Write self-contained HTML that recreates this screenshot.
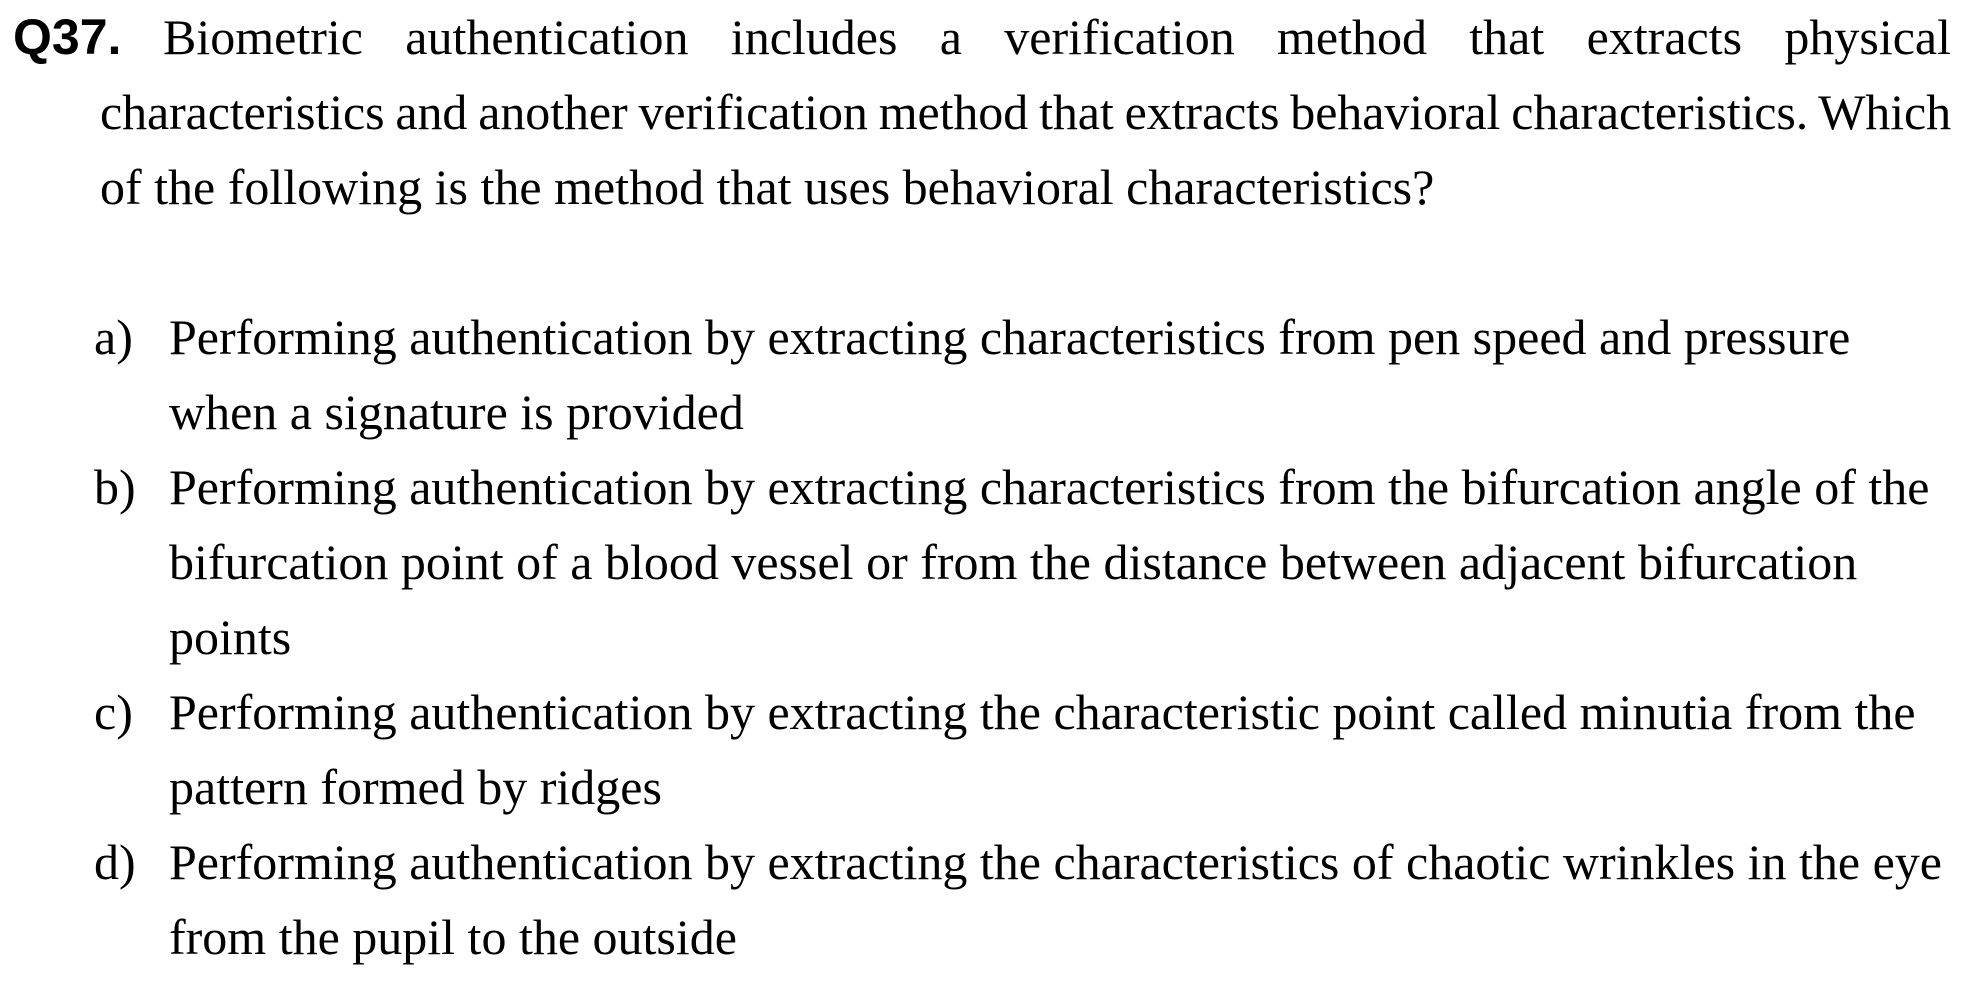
<!DOCTYPE html>
<html><head><meta charset="utf-8"><style>
html,body{margin:0;padding:0;background:#fff;}
body{width:1967px;height:984px;overflow:hidden;position:relative;font-family:"Liberation Serif","Times New Roman",serif;font-size:50px;color:#000;}
.l{position:absolute;height:75px;line-height:75px;white-space:nowrap;}
.j{text-align:justify;text-align-last:justify;left:100px;width:1851px;}
.q{position:absolute;left:13px;top:0px;line-height:75px;font-family:"Liberation Sans",Arial,sans-serif;font-weight:bold;font-size:50px;}
.lab{position:absolute;left:94px;line-height:75px;}
.t{left:169px;}
</style></head><body>
<div class="q">Q37.</div>
<div class="l j" style="left:163px;width:1788px;top:0px">Biometric authentication includes a verification method that extracts physical</div>
<div class="l j" style="top:75px;word-spacing:-3px;letter-spacing:-0.1px">characteristics and another verification method that extracts behavioral characteristics. Which</div>
<div class="l" style="left:100px;top:150px">of the following is the method that uses behavioral characteristics?</div>

<div class="lab" style="top:300px">a)</div>
<div class="l t" style="top:300px">Performing authentication by extracting characteristics from pen speed and pressure</div>
<div class="l t" style="top:375px">when a signature is provided</div>

<div class="lab" style="top:450px">b)</div>
<div class="l t" style="top:450px">Performing authentication by extracting characteristics from the bifurcation angle of the</div>
<div class="l t" style="top:525px">bifurcation point of a blood vessel or from the distance between adjacent bifurcation</div>
<div class="l t" style="top:600px">points</div>

<div class="lab" style="top:675px">c)</div>
<div class="l t" style="top:675px">Performing authentication by extracting the characteristic point called minutia from the</div>
<div class="l t" style="top:750px">pattern formed by ridges</div>

<div class="lab" style="top:825px">d)</div>
<div class="l t" style="top:825px">Performing authentication by extracting the characteristics of chaotic wrinkles in the eye</div>
<div class="l t" style="top:900px">from the pupil to the outside</div>
</body></html>
